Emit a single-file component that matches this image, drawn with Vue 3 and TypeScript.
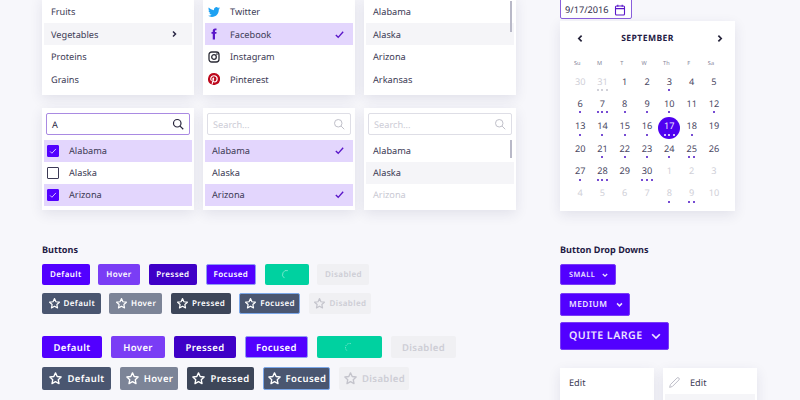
<script setup lang="ts">
type Btn = { label: string; kind: string; width: number };
type Day = { n: number; dots?: number; muted?: boolean; selected?: boolean };

const foods = ["Fruits", "Vegetables", "Proteins", "Grains"];
const states = ["Alabama", "Alaska", "Arizona", "Arkansas"];
const weekdays = ["Su", "M", "T", "W", "Th", "F", "Sa"];

const smallBtns: Btn[] = [
  { label: "Default", kind: "default", width: 47.5 },
  { label: "Hover", kind: "hover", width: 41.5 },
  { label: "Pressed", kind: "pressed", width: 48.5 },
  { label: "Focused", kind: "focused", width: 50 },
  { label: "", kind: "loading", width: 44 },
  { label: "Disabled", kind: "disabled", width: 52 },
];
const smallIconBtns: Btn[] = [
  { label: "Default", kind: "slate", width: 58.7 },
  { label: "Hover", kind: "slate-hover", width: 52.3 },
  { label: "Pressed", kind: "slate-pressed", width: 60 },
  { label: "Focused", kind: "slate-focused", width: 60.5 },
  { label: "Disabled", kind: "disabled", width: 62.5 },
];
const bigBtns: Btn[] = [
  { label: "Default", kind: "default", width: 60 },
  { label: "Hover", kind: "hover", width: 54 },
  { label: "Pressed", kind: "pressed", width: 62 },
  { label: "Focused", kind: "focused", width: 63 },
  { label: "", kind: "loading", width: 65 },
  { label: "Disabled", kind: "disabled", width: 65 },
];
const bigIconBtns: Btn[] = [
  { label: "Default", kind: "slate", width: 69 },
  { label: "Hover", kind: "slate-hover", width: 58 },
  { label: "Pressed", kind: "slate-pressed", width: 67 },
  { label: "Focused", kind: "slate-focused", width: 67 },
  { label: "Disabled", kind: "disabled", width: 70 },
];

const days: Day[] = [
  { n: 30, muted: true }, { n: 31, muted: true, dots: 3 }, { n: 1 }, { n: 2 }, { n: 3, dots: 1 }, { n: 4 }, { n: 5 },
  { n: 6, dots: 1 }, { n: 7, dots: 3 }, { n: 8, dots: 1 }, { n: 9, dots: 1 }, { n: 10, dots: 1 }, { n: 11 }, { n: 12, dots: 1 },
  { n: 13, dots: 1 }, { n: 14, dots: 1 }, { n: 15, dots: 1 }, { n: 16, dots: 1 }, { n: 17, dots: 3, selected: true }, { n: 18, dots: 1 }, { n: 19 },
  { n: 20 }, { n: 21, dots: 1 }, { n: 22, dots: 1 }, { n: 23, dots: 1 }, { n: 24, dots: 1 }, { n: 25, dots: 2 }, { n: 26 },
  { n: 27, dots: 1 }, { n: 28, dots: 3 }, { n: 29 }, { n: 30, dots: 3 }, { n: 1, muted: true }, { n: 2, muted: true }, { n: 3, muted: true },
  { n: 4, muted: true }, { n: 5, muted: true }, { n: 6, muted: true }, { n: 7, muted: true }, { n: 8, muted: true, dots: 1 }, { n: 9, muted: true, dots: 2 }, { n: 10, muted: true },
];

const starPath = "M12 3l2.7 5.8 6.3.8-4.6 4.3 1.2 6.2L12 17l-5.6 3.1 1.2-6.2L3 9.6l6.3-.8z";
</script>

<template>
  <div class="page">
    <div class="left">
      <div class="cards top">
        <div class="card">
          <div v-for="(f, i) in foods" :key="f" class="row" :class="{ soft: i === 1 }">
            {{ f }}
            <svg v-if="i === 1" class="chev" viewBox="0 0 8 8"><path d="M3 1.5L5.5 4 3 6.5" /></svg>
          </div>
        </div>
        <div class="card">
          <div class="row social">
            <svg class="brand" viewBox="0 0 24 24"><path fill="#1da1f2" d="M23.95 4.57a10 10 0 01-2.82.77 4.96 4.96 0 002.16-2.72c-.95.55-2 .95-3.12 1.18a4.92 4.92 0 00-8.38 4.48C7.69 8.09 4.07 6.13 1.64 3.16a4.82 4.82 0 00-.67 2.48c0 1.71.87 3.21 2.19 4.1a4.9 4.9 0 01-2.23-.62v.06a4.92 4.92 0 003.95 4.83 5 5 0 01-2.21.08 4.94 4.94 0 004.6 3.42A9.87 9.87 0 010 19.54a14 14 0 007.56 2.21c9.05 0 14-7.5 14-13.98 0-.21 0-.42-.02-.63A9.94 9.94 0 0024 4.59z" /></svg>
            Twitter
          </div>
          <div class="row social lilac">
            <svg class="brand" viewBox="0 0 24 24"><path fill="#5a16c9" d="M14 8V6c0-.9.2-1.4 1.6-1.4H17V1h-2.8C10.9 1 9.5 3 9.5 5.7V8H7v3.7h2.5V23H14V11.7h2.7l.4-3.7z" /></svg>
            Facebook
            <svg class="tick" viewBox="0 0 12 12"><path d="M2 6.5l2.6 2.6L10 3" /></svg>
          </div>
          <div class="row social">
            <svg class="brand" viewBox="0 0 24 24" fill="none" stroke="#2b2b36" stroke-width="2.6"><rect x="2" y="2" width="20" height="20" rx="5.5" /><circle cx="12" cy="12" r="4.6" /><circle cx="17.8" cy="6.2" r=".6" /></svg>
            Instagram
          </div>
          <div class="row social">
            <svg class="brand" viewBox="2 2 20 20"><path fill="#bd081c" d="M12 2a10 10 0 00-3.64 19.3c-.09-.79-.17-2 .03-2.87l1.17-4.97s-.3-.6-.3-1.48c0-1.39.8-2.42 1.8-2.42.85 0 1.26.64 1.26 1.4 0 .85-.54 2.13-.82 3.3-.23.99.5 1.8 1.47 1.8 1.77 0 3.13-1.87 3.13-4.56 0-2.38-1.71-4.05-4.16-4.05-2.83 0-4.5 2.13-4.5 4.33 0 .86.33 1.78.74 2.28.08.1.09.19.07.29l-.28 1.12c-.04.18-.14.22-.33.13-1.24-.58-2.01-2.39-2.01-3.85 0-3.14 2.28-6.02 6.57-6.02 3.45 0 6.13 2.46 6.13 5.74 0 3.43-2.16 6.19-5.16 6.19-1.01 0-1.96-.52-2.28-1.14l-.62 2.37c-.22.86-.83 1.94-1.23 2.6A10 10 0 1012 2z" /></svg>
            Pinterest
          </div>
        </div>
        <div class="card scroll">
          <div v-for="(s, i) in states" :key="s" class="row" :class="{ soft: i === 1 }">{{ s }}</div>
          <span class="thumb thumb-top"></span>
        </div>
      </div>

      <div class="cards">
        <div class="card search">
          <div class="input active">
            A
            <svg class="lens" viewBox="0 0 16 16"><circle cx="7" cy="7" r="5" /><path d="M10.8 10.8L15 15" /></svg>
          </div>
          <div class="row check lilac"><span class="box on"><svg viewBox="0 0 12 12"><path d="M2.5 6.5l2.2 2.2L9.5 3.5" /></svg></span>Alabama</div>
          <div class="row check"><span class="box"></span>Alaska</div>
          <div class="row check lilac"><span class="box on"><svg viewBox="0 0 12 12"><path d="M2.5 6.5l2.2 2.2L9.5 3.5" /></svg></span>Arizona</div>
        </div>
        <div class="card search">
          <div class="input placeholder">
            Search...
            <svg class="lens" viewBox="0 0 16 16"><circle cx="7" cy="7" r="5" /><path d="M10.8 10.8L15 15" /></svg>
          </div>
          <div class="row lilac">Alabama<svg class="tick" viewBox="0 0 12 12"><path d="M2 6.5l2.6 2.6L10 3" /></svg></div>
          <div class="row">Alaska</div>
          <div class="row lilac">Arizona<svg class="tick" viewBox="0 0 12 12"><path d="M2 6.5l2.6 2.6L10 3" /></svg></div>
        </div>
        <div class="card search scroll">
          <div class="input placeholder">
            Search...
            <svg class="lens" viewBox="0 0 16 16"><circle cx="7" cy="7" r="5" /><path d="M10.8 10.8L15 15" /></svg>
          </div>
          <div class="row">Alabama</div>
          <div class="row soft">Alaska</div>
          <div class="row faded">Arizona</div>
          <span class="thumb thumb-search"></span>
        </div>
      </div>

      <h3 class="heading">Buttons</h3>
      <div class="btn-row">
        <button v-for="b in smallBtns" :key="b.kind" class="btn" :class="b.kind" :style="{ width: b.width + 'px' }">
          <svg v-if="b.kind === 'loading'" class="spin" viewBox="0 0 16 16"><path d="M10 2.4A6 6 0 0 0 5 13.2" /></svg>
          {{ b.label }}
        </button>
      </div>
      <div class="btn-row">
        <button v-for="b in smallIconBtns" :key="b.kind" class="btn" :class="b.kind" :style="{ width: b.width + 'px' }">
          <svg class="star" viewBox="0 0 24 24"><path :d="starPath" /></svg>
          {{ b.label }}
        </button>
      </div>
      <div class="btn-row big first-big">
        <button v-for="b in bigBtns" :key="b.kind" class="btn" :class="b.kind" :style="{ width: b.width + 'px' }">
          <svg v-if="b.kind === 'loading'" class="spin" viewBox="0 0 16 16"><path d="M10 2.4A6 6 0 0 0 5 13.2" stroke-dasharray="2 1.4" /></svg>
          {{ b.label }}
        </button>
      </div>
      <div class="btn-row big tall">
        <button v-for="b in bigIconBtns" :key="b.kind" class="btn" :class="b.kind" :style="{ width: b.width + 'px' }">
          <svg class="star" viewBox="0 0 24 24"><path :d="starPath" /></svg>
          {{ b.label }}
        </button>
      </div>
    </div>

    <div class="right">
      <div class="date-input">
        9/17/2016
        <svg class="cal-icon" viewBox="0 0 12 12"><rect x="1.5" y="2" width="9" height="9" rx="1" /><path d="M1.5 4.6h9M3.8 .8v2M8.2 .8v2" /></svg>
      </div>
      <div class="calendar">
        <div class="cal-head">
          <svg class="arrow" viewBox="0 0 8 8"><path d="M5 1.5L2.5 4 5 6.5" /></svg>
          <span>SEPTEMBER</span>
          <svg class="arrow" viewBox="0 0 8 8"><path d="M3 1.5L5.5 4 3 6.5" /></svg>
        </div>
        <div class="cal-grid weekdays">
          <span v-for="w in weekdays" :key="w">{{ w }}</span>
        </div>
        <div class="cal-grid">
          <div v-for="(d, i) in days" :key="i" class="day" :class="{ muted: d.muted, selected: d.selected }">
            <span class="num">{{ d.n }}</span>
            <span class="dots"><i v-for="k in d.dots || 0" :key="k"></i></span>
          </div>
        </div>
      </div>

      <h3 class="heading drop-heading">Button Drop Downs</h3>
      <div class="drops">
        <button class="drop sm">SMALL<svg viewBox="0 0 8 8"><path d="M1.8 3L4 5.2 6.2 3" /></svg></button>
        <button class="drop md">MEDIUM<svg viewBox="0 0 8 8"><path d="M1.8 3L4 5.2 6.2 3" /></svg></button>
        <button class="drop lg">QUITE LARGE<svg viewBox="0 0 8 8"><path d="M1.8 3L4 5.2 6.2 3" /></svg></button>
      </div>
      <div class="menus">
        <div class="card menu"><div class="row">Edit</div><div class="row"></div></div>
        <div class="card menu">
          <div class="row iconed">
            <svg class="pencil" viewBox="0 0 16 16"><path d="M3 10.5L11 2.5a1.6 1.6 0 0 1 2.4 2.4l-8 8L2 14z" /></svg>
            Edit
          </div>
          <div class="row soft"></div>
        </div>
      </div>
    </div>
  </div>
</template>

<style>
html,
body {
  overflow: hidden;
  background: #f7f7fb;
}
</style>

<style scoped>
.page {
  display: flex;
  gap: 44px;
  width: 800px;
  height: 404px;
  margin-top: -4px;
  padding-left: 42px;
  box-sizing: border-box;
  overflow: hidden;
  background: #f7f7fb;
  color: #3c3a55;
  font-family: "Noto Sans", "Open Sans", sans-serif;
  font-size: 9.2px;
  text-rendering: geometricPrecision;
}
.left {
  width: 474px;
  flex: none;
}
.right {
  width: 197px;
  flex: none;
}
.cards {
  display: grid;
  grid-template-columns: repeat(3, 152px);
  gap: 9px;
  margin-top: 13px;
}
.cards.top {
  margin-top: 0;
}
.card {
  position: relative;
  box-sizing: border-box;
  padding: 5px 2px 4px;
  background: #fff;
  box-shadow: 0 4px 12px rgba(40, 40, 90, 0.1);
}
.cards.top .card {
  height: 99px;
  padding-top: 4.7px;
}
.row {
  display: flex;
  align-items: center;
  box-sizing: border-box;
  height: 22.4px;
  padding: 0 7px;
  white-space: nowrap;
}
.soft {
  background: #f5f5f8;
}
.lilac {
  background: #e3d6fd;
}
.faded {
  color: #c9c9d3;
}
.chev {
  width: 8px;
  height: 8px;
  margin-left: auto;
  margin-right: 7px;
  fill: none;
  stroke: #2a2745;
  stroke-width: 1.5;
}
.social {
  padding-left: 3px;
}
.brand {
  width: 12px;
  height: 12px;
  margin-right: 10px;
  flex: none;
}
.tick {
  width: 11px;
  height: 11px;
  margin-left: auto;
  margin-right: 1px;
  fill: none;
  stroke: #5a16c9;
  stroke-width: 1.5;
}
.thumb {
  position: absolute;
  right: 4px;
  width: 2px;
  background: #b9b9c8;
}
.thumb-top {
  top: 5px;
  height: 31px;
}
.thumb-search {
  top: 32px;
  height: 18px;
}
.search .row {
  height: 22px;
  padding-bottom: 1px;
}
.input {
  display: flex;
  align-items: center;
  box-sizing: border-box;
  height: 22px;
  margin: 0 2px 5px;
  padding: 0 5px;
  background: #fff;
  border: 1px solid #dedee6;
  border-radius: 2px;
}
.input.active {
  border: 1.5px solid #a98ae2;
  color: #2a2745;
}
.placeholder {
  color: #ccccd6;
}
.lens {
  width: 12px;
  height: 12px;
  margin-left: auto;
  fill: none;
  stroke: #bdbdc6;
  stroke-width: 1.3;
}
.active .lens {
  stroke: #25233a;
  stroke-width: 1.6;
}
.check {
  padding-left: 3px;
}
.box {
  display: flex;
  align-items: center;
  justify-content: center;
  box-sizing: border-box;
  width: 12px;
  height: 12px;
  margin-right: 10px;
  border: 1.3px solid #3c3a55;
  border-radius: 1px;
  background: #fff;
}
.box.on {
  border-color: #5200ff;
  background: #5200ff;
}
.box svg {
  width: 10px;
  height: 10px;
  fill: none;
  stroke: #d8c4ff;
  stroke-width: 1.2;
}
.heading {
  margin: 33px 0 7px;
  height: 14px;
  color: #1f1b45;
  font-size: 9.1px;
  font-weight: 700;
  line-height: 14px;
}
.drop-heading {
  margin-top: 32px;
}
.btn-row {
  display: flex;
  gap: 8.8px;
  height: 21px;
  margin-bottom: 8px;
}
.btn-row.big {
  gap: 9px;
  height: 22px;
  margin-bottom: 9px;
}
.btn-row.first-big {
  margin-top: 22px;
}
.btn-row.tall {
  height: 23px;
}
.btn {
  display: flex;
  align-items: center;
  justify-content: center;
  gap: 3px;
  box-sizing: border-box;
  height: 100%;
  padding: 0;
  border: 1px solid transparent;
  border-radius: 2px;
  color: #fff;
  font: 600 8px "Noto Sans", "Open Sans", sans-serif;
  letter-spacing: 0.4px;
  white-space: nowrap;
  text-rendering: geometricPrecision;
}
.big .btn {
  gap: 4px;
  font-size: 9.5px;
}
.default,
.focused {
  background: #5200ff;
}
.focused {
  border-color: #8f9cf2;
}
.hover {
  background: #7a3df5;
}
.pressed {
  background: #3f00c7;
}
.loading {
  background: #00d1a0;
}
.disabled {
  background: #f0f0f3;
  color: #cdcdd5;
}
.slate {
  background: #4a5670;
}
.slate-hover {
  background: #7c8497;
}
.slate-pressed {
  background: #3d4659;
}
.slate-focused {
  background: #4a5670;
  border-color: #7ba7e8;
}
.star {
  width: 13px;
  height: 13px;
  fill: none;
  stroke: currentColor;
  stroke-width: 2.2;
  stroke-linejoin: round;
}
.big .star {
  width: 15px;
  height: 15px;
}
.disabled .star {
  stroke: #c4c4cc;
}
.spin {
  width: 11px;
  height: 11px;
  fill: none;
  stroke: #a8f0dd;
  stroke-width: 1;
}
.date-input {
  display: flex;
  align-items: center;
  box-sizing: border-box;
  width: 72px;
  height: 23px;
  padding: 4px 5px 0 4px;
  background: #fff;
  border: 1.5px solid #8a5fdc;
  border-radius: 2px;
  color: #2f2c4a;
}
.cal-icon {
  flex: none;
  width: 12px;
  height: 12px;
  margin-left: auto;
  fill: none;
  stroke: #5a16c9;
  stroke-width: 1.1;
}
.calendar {
  box-sizing: border-box;
  width: 175px;
  height: 190px;
  margin-top: 2px;
  padding: 8px 10px 0 9px;
  background: #fff;
  box-shadow: 0 4px 12px rgba(40, 40, 90, 0.1);
}
.cal-head {
  display: flex;
  align-items: center;
  justify-content: space-between;
  height: 18px;
  padding: 0 1.5px 0 6.5px;
  color: #1f1b45;
  font-size: 8.6px;
  font-weight: 700;
  letter-spacing: 0.4px;
}
.cal-head span {
  margin-right: 4px;
}
.arrow {
  width: 9px;
  height: 9px;
  fill: none;
  stroke: #25233a;
  stroke-width: 1.5;
}
.cal-grid {
  display: grid;
  grid-template-columns: repeat(7, 22.3px);
  grid-auto-rows: 22.4px;
  margin-top: 3px;
}
.weekdays {
  grid-auto-rows: 12px;
  margin-top: 10px;
  color: #85859a;
  font-size: 5.6px;
  line-height: 12px;
  text-align: center;
}
.weekdays span {
  padding-right: 6px;
}
.day {
  display: flex;
  flex-direction: column;
  align-items: center;
  box-sizing: border-box;
  padding-top: 2.5px;
  border-radius: 50%;
}
.num {
  height: 13px;
  line-height: 13px;
  color: #4a4862;
}
.muted .num {
  color: #d0d0d8;
}
.selected {
  background: #4f00f0;
}
.selected .num {
  color: #f0e8ff;
}
.dots {
  display: flex;
  gap: 2.7px;
  height: 2px;
  margin-top: 1.5px;
}
.dots i {
  width: 2px;
  height: 2px;
  border-radius: 50%;
  background: #4a10c4;
}
.day:nth-child(2) .dots i {
  background: #c2c2cc;
}
.selected .dots i {
  background: #fff;
}
.drops {
  display: flex;
  flex-direction: column;
  align-items: flex-start;
}
.drop {
  display: flex;
  align-items: center;
  justify-content: space-between;
  box-sizing: border-box;
  padding: 0 6px 0 8px;
  border: 1px solid #7a3df5;
  border-radius: 2px;
  background: #5200ff;
  color: #ece2ff;
  font-family: "Noto Sans", "Open Sans", sans-serif;
  font-weight: 600;
  letter-spacing: 0.5px;
  white-space: nowrap;
  text-rendering: geometricPrecision;
}
.drop svg {
  fill: none;
  stroke: currentColor;
  stroke-width: 1.3;
}
.sm {
  width: 56px;
  height: 21px;
  font-size: 7.3px;
}
.sm svg {
  width: 8px;
  height: 8px;
}
.md {
  width: 70px;
  height: 23px;
  margin-top: 8px;
  padding-right: 5.5px;
  font-size: 8.3px;
}
.md svg {
  width: 9px;
  height: 9px;
}
.lg {
  width: 109px;
  height: 28px;
  margin-top: 6px;
  padding-right: 5px;
  font-size: 10.6px;
}
.lg svg {
  width: 14px;
  height: 14px;
  stroke-width: 1;
}
.menus {
  display: grid;
  grid-template-columns: repeat(2, 94px);
  gap: 9px;
  margin-top: 18px;
}
.menu {
  height: 60px;
  padding-top: 4px;
}
.menu .row {
  padding-bottom: 1px;
}
.iconed {
  padding-left: 3px;
}
.pencil {
  width: 13px;
  height: 13px;
  margin-right: 9px;
  fill: none;
  stroke: #bcbcc6;
  stroke-width: 1.2;
}
</style>
